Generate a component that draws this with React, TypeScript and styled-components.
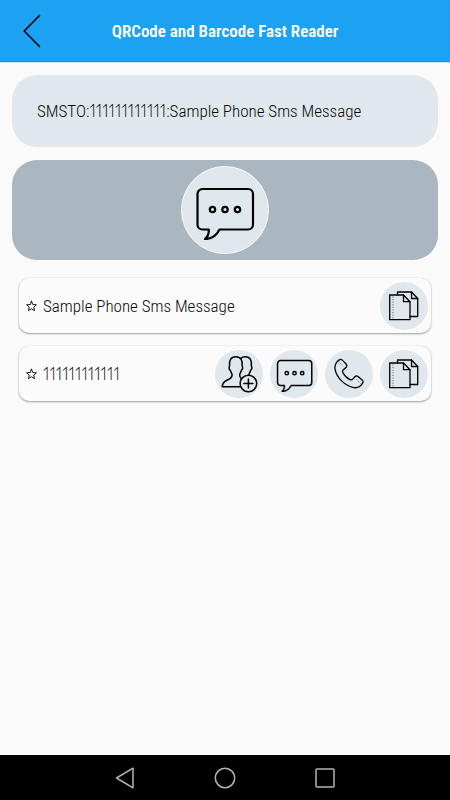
import React from "react";
import styled, { createGlobalStyle } from "styled-components";

const GlobalStyle = createGlobalStyle`
  *, *::before, *::after { box-sizing: border-box; }
  body {
    margin: 0;
    background: #fafafa;
    color: #0a0a0a;
    font-family: "Roboto Condensed", "Liberation Sans Narrow", Roboto, sans-serif;
  }
  button {
    border: 0;
    padding: 0;
    background: none;
    color: inherit;
    font: inherit;
    cursor: pointer;
  }
  svg { display: block; }
`;

const Screen = styled.div`
  min-height: 100vh;
  display: flex;
  flex-direction: column;
`;

const Header = styled.header`
  height: 62px;
  display: grid;
  grid-template-columns: 64px 1fr 64px;
  align-items: center;
  background: #1da1f2;
  border-bottom: 1px solid #1495ea;
  box-shadow: 0 1px 0 #c4e3fa;
`;

const BackButton = styled.button`
  height: 61px;
  display: grid;
  place-items: center;
`;

const Title = styled.h1`
  margin: 0;
  color: #fff;
  font-size: 17px;
  font-weight: 600;
  line-height: 24px;
  text-align: center;
  white-space: nowrap;
`;

const Content = styled.main`
  flex: 1;
  display: flex;
  flex-direction: column;
  gap: 13px;
  padding: 13px 12px;
`;

const RawText = styled.p`
  margin: 0;
  padding: 24px 25px;
  border-radius: 25px;
  background: #e0e7ed;
  font-size: 17px;
  font-weight: 300;
  line-height: 24px;
`;

const Digits = styled.span`
  font-family: Lato, sans-serif;
  font-variant-numeric: proportional-nums;
`;

const TypeBanner = styled.section`
  display: flex;
  justify-content: center;
  padding: 6px;
  border-radius: 25px;
  background: #aab7c0;
`;

const TypeBadge = styled.div`
  width: 88px;
  height: 88px;
  display: grid;
  place-items: center;
  border: 1px solid #fafafa;
  border-radius: 50%;
  background: #e0e7ed;
`;

const FieldList = styled.ul`
  list-style: none;
  margin: 0;
  padding: 5px 7px;
  display: flex;
  flex-direction: column;
  gap: 13px;
`;

const FieldCard = styled.li`
  min-height: 55px;
  display: flex;
  align-items: center;
  gap: 6px;
  padding: 3px 3px 3px 7px;
  border-radius: 10px;
  background: #fbfbfb;
  box-shadow: 0 1px 2px rgba(0, 0, 0, 0.35), 0 0 1px rgba(0, 0, 0, 0.2);
`;

const FieldText = styled.span`
  flex: 1;
  font-size: 17px;
  font-weight: 300;
  line-height: 24px;
`;

const Actions = styled.div`
  display: flex;
  gap: 7px;
`;

const RoundButton = styled.button`
  width: 48px;
  height: 48px;
  border-radius: 50%;
  background: #e0e7ed;
  display: grid;
  place-items: center;
`;

const SystemBar = styled.nav`
  height: 45px;
  display: flex;
  justify-content: center;
  align-items: center;
  gap: 52px;
  background: #000;
`;

const SystemButton = styled.button`
  width: 48px;
  height: 45px;
  display: grid;
  place-items: center;
`;

const line = {
  fill: "none",
  stroke: "#000",
  strokeLinejoin: "round",
  strokeLinecap: "round",
} as const;

const BackIcon = () => (
  <svg width="18" height="34" viewBox="0 0 18 34" {...line} strokeWidth="1.6" aria-hidden>
    <path d="M16.5 1.5 1.2 17l15.3 15.5" />
  </svg>
);

const MessageIcon = ({ size, weight }: { size: number; weight: number }) => (
  <svg width={size} height={size} viewBox="0 -3 60 60" {...line} strokeWidth={weight} aria-hidden>
    <path d="M7.5 6h45.500a5 5 0 0 1 5 5v30.500a5 5 0 0 1-5 5H24.500c-2.500 5-7 9.500-14.500 9.500 3.200-2.500 4-5.500 3.800-9.500H7.500a5 5 0 0 1-5-5V11a5 5 0 0 1 5-5z" />
    <circle cx="17.500" cy="26.500" r="2.700" />
    <circle cx="30" cy="26.500" r="2.700" />
    <circle cx="42.500" cy="26.500" r="2.700" />
  </svg>
);

const StarIcon = () => (
  <svg width="11" height="12" viewBox="0 0 22 24" {...line} strokeWidth="1.8" aria-hidden>
    <path d="M11 2.500l2.700 6.500 7.100.6-5.400 4.600 1.700 7L11 17.500l-6.100 3.700 1.700-7L1.200 9.600 8.300 9z" />
  </svg>
);

const CopyIcon = () => (
  <svg width="48" height="48" viewBox="0 0 48 48" {...line} strokeWidth="1.300" aria-hidden>
    <path d="M17.500 13v-3h14l6.200 6.500v18H30" />
    <path d="M31.500 10v6.500h6.200" />
    <path d="M9.700 13h13.800l6.500 6.700v18H9.700z" />
    <path d="M23.500 13v6.700H30" />
    <path d="M13 14.500v22" strokeWidth="0.900" strokeDasharray="1 1.600" strokeLinecap="butt" stroke="#444" />
  </svg>
);

const PhoneIcon = () => (
  <svg width="48" height="48" viewBox="0 0 48 48" {...line} strokeWidth="1.300" aria-hidden>
    <path d="M14.700 9.600c1-.4 1.900-.2 2.600.5l4 4.200c.9 1 .8 2-.1 2.900l-2.600 2.300c-1 .9-1.500 1.700-1 2.700 1.700 3.300 4.200 5.900 7.500 7.500 1.100.5 2 .1 2.800-.8l2.200-2.400c.9-.9 1.900-.9 2.900 0l4.400 3.800c.9.800 1 1.700.4 2.600-1.900 3.200-5.200 5.300-8.800 4.700-9.200-1.800-17-9.500-18.900-18-.8-4 1-8.300 4.600-10z" />
    <path d="M13.500 11.300l4.600 5.200M31.500 29.500l4.600 4.300" strokeWidth="0.800" strokeDasharray="1 1.200" strokeLinecap="butt" stroke="#444" />
  </svg>
);

const AddContactIcon = () => (
  <svg width="48" height="48" viewBox="0 0 48 48" {...line} strokeWidth="1.500" aria-hidden>
    <path d="M24.800 36.800H7.200c.2-3.300 1.400-5 4.300-6.300 3.600-1.500 5.700-2.500 5.600-5.700 0-1.500-1.400-2.500-1.900-4.600-1.300-.8-1.500-3.300-.6-4.200-1-5.500 1.500-9.200 6.200-9.200s7.300 3.700 6.300 9.200c.9.900.7 3.400-.6 4.200-.5 2.100-1.700 3.200-1.800 4.700-.1 1.700.4 2.700 1.400 3.500" />
    <path d="M25.800 8.300c1.200-1 2.800-1.500 4.500-1.500 4.600 0 7 3.700 6 9.200.9.900.7 3.400-.6 4.200-.4 1.500-1.500 2.700-1.700 4.300" />
    <circle cx="33.400" cy="33.500" r="8.300" />
    <path d="M33.400 29v9M28.900 33.500h9" />
  </svg>
);

const system = { fill: "none", stroke: "#b4b4b4", strokeWidth: 1.5, strokeLinejoin: "round" } as const;

export default function App() {
  return (
    <>
      <GlobalStyle />
      <Screen>
        <Header>
          <BackButton type="button" aria-label="Back">
            <BackIcon />
          </BackButton>
          <Title>QRCode and Barcode Fast Reader</Title>
        </Header>

        <Content>
          <RawText>
            SMSTO:<Digits>111111111111</Digits>:Sample Phone Sms Message
          </RawText>

          <TypeBanner aria-label="SMS">
            <TypeBadge>
              <MessageIcon size={60} weight={2.2} />
            </TypeBadge>
          </TypeBanner>

          <FieldList>
            <FieldCard>
              <StarIcon />
              <FieldText>Sample Phone Sms Message</FieldText>
              <Actions>
                <RoundButton type="button" aria-label="Copy message">
                  <CopyIcon />
                </RoundButton>
              </Actions>
            </FieldCard>
            <FieldCard>
              <StarIcon />
              <FieldText>
                <Digits>111111111111</Digits>
              </FieldText>
              <Actions>
                <RoundButton type="button" aria-label="Add contact">
                  <AddContactIcon />
                </RoundButton>
                <RoundButton type="button" aria-label="Send message">
                  <MessageIcon size={37} weight={2.4} />
                </RoundButton>
                <RoundButton type="button" aria-label="Call">
                  <PhoneIcon />
                </RoundButton>
                <RoundButton type="button" aria-label="Copy number">
                  <CopyIcon />
                </RoundButton>
              </Actions>
            </FieldCard>
          </FieldList>
        </Content>

        <SystemBar aria-label="System navigation">
          <SystemButton type="button" aria-label="Back">
            <svg width="24" height="24" viewBox="0 0 24 24" {...system} aria-hidden>
              <path d="M20 2.200v19.600L3.500 12z" />
            </svg>
          </SystemButton>
          <SystemButton type="button" aria-label="Home">
            <svg width="24" height="24" viewBox="0 0 24 24" {...system} aria-hidden>
              <circle cx="12" cy="12" r="9.700" />
            </svg>
          </SystemButton>
          <SystemButton type="button" aria-label="Recent apps">
            <svg width="24" height="24" viewBox="0 0 24 24" {...system} aria-hidden>
              <rect x="3" y="3" width="18" height="18" rx="1" />
            </svg>
          </SystemButton>
        </SystemBar>
      </Screen>
    </>
  );
}
